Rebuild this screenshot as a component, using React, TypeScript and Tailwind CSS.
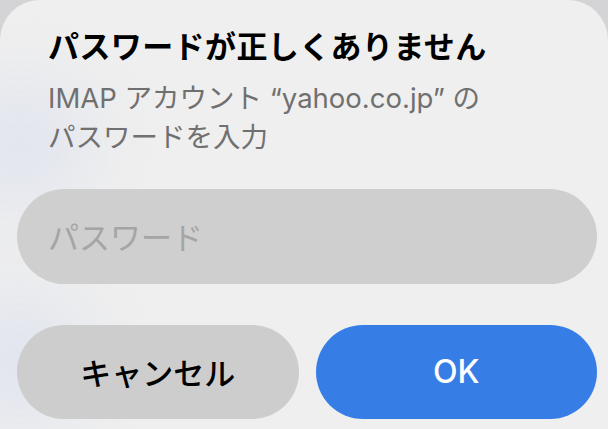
const jp = "font-['Noto_Sans_CJK_JP','Noto_Sans',sans-serif]";
const mixed = "font-['Inter','Noto_Sans_CJK_JP',sans-serif]";

export default function App() {
  return (
    <div className={`h-[429px] w-[608px] overflow-hidden bg-[#d4d4d6] ${jp}`}>
      <div className="relative h-full w-full rounded-tl-[40px] rounded-tr-[40px] bg-[#efefef] pl-[17px] pr-[11px] pt-[25px]">
        {/* faint blurred backdrop */}
        <div className="pointer-events-none absolute -left-10 top-[90px] h-[110px] w-[120px] rounded-full bg-[#dde2ee] blur-2xl" />
        <div className="pointer-events-none absolute -left-10 top-[300px] h-[120px] w-[120px] rounded-full bg-[#dde2ee] blur-2xl" />

        <div className="relative">
          <h1 className="pl-[31px] text-[31px] font-bold leading-[40px] tracking-[0.4px] text-black">
            パスワードが正しくありません
          </h1>
          <p className={`mt-[14px] pl-[31px] text-[27.5px] leading-[39px] text-[#707070] ${mixed}`}>
            IMAP アカウント “yahoo.co.jp” の
            <br />
            パスワードを入力
          </p>

          <div className="mt-[32px] flex h-[95px] items-center rounded-full bg-[#cfcfcf] pl-[31px]">
            <span className="text-[31px] text-[#a5a5a5]">パスワード</span>
          </div>

          <div className="mt-[41px] flex gap-[17px]">
            <button className="flex h-[94px] flex-1 items-center justify-center rounded-full bg-[#cdcdcd] text-[31px] font-medium text-black">
              キャンセル
            </button>
            <button className={`flex h-[94px] flex-1 items-center justify-center rounded-full bg-[#377de6] text-[32px] font-medium text-white ${mixed}`}>
              OK
            </button>
          </div>
        </div>
      </div>
    </div>
  );
}
